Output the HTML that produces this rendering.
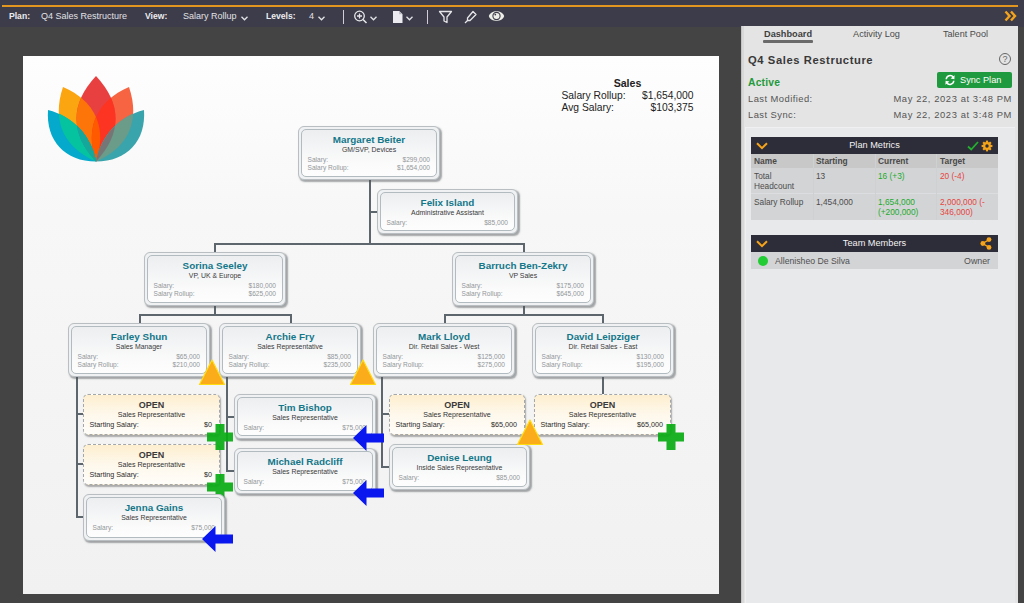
<!DOCTYPE html>
<html><head><meta charset="utf-8">
<style>
*{margin:0;padding:0;box-sizing:border-box}
html,body{width:1024px;height:603px;overflow:hidden;background:#444;font-family:"Liberation Sans", sans-serif}
.ab{position:absolute;display:block}
#top{position:absolute;left:0;top:0;width:1024px;height:27px;background:#3c3c4a}
#oline{position:absolute;left:2px;top:5px;width:1016px;height:2px;background:#e2961f}
.tb{position:absolute;top:11.3px;font-size:9px;line-height:10px;color:#e2e2e6;white-space:nowrap}
.tb.b{font-weight:bold;font-size:8.6px;color:#ececf0}
#canvas{position:absolute;left:23px;top:56px;width:696px;height:537.5px;background:linear-gradient(#fefefe 0%,#f7f7f7 30%,#f1f1f1 100%)}
#chart{position:absolute;left:0;top:0;width:1024px;height:603px}
.ln{position:absolute;background:#5c666c}
.nd{position:absolute;border:1px solid #b8bec2;border-radius:6px;background:#eff1f2;box-shadow:1.5px 1.5px 1.5px rgba(80,85,90,.5)}
.ni{position:absolute;left:2px;top:2px;right:2px;bottom:2px;border:1px solid #b2bbbf;border-radius:5px;background:linear-gradient(#eceef0,#fbfbfb 75%,#fdfdfd);text-align:center}
.nm{font-weight:bold;font-size:9.9px;line-height:10px;color:#13778a;margin-top:5px;white-space:nowrap}
.tt{font-size:6.9px;line-height:9px;color:#3a3a3a;white-space:nowrap}
.rw{display:flex;justify-content:space-between;font-size:6.6px;line-height:8.6px;color:#92979a;padding:0 6px 0 5.5px;white-space:nowrap}
.rw:nth-child(3){margin-top:2px}
.rw:nth-child(4){margin-top:-0.5px}
.op{position:absolute;border:1px dashed #a4a8aa;border-radius:5px;background:linear-gradient(#fdeecf,#fef8ec 50%,#fffdf9);box-shadow:1px 1.5px 1.5px rgba(60,60,60,.4);text-align:center}
.on{font-weight:bold;font-size:9px;line-height:10px;color:#3a3a3a;margin-top:5px}
.ot{font-size:7.1px;line-height:9px;color:#333;margin-top:0.5px}
.os{display:flex;justify-content:space-between;font-size:7.2px;line-height:9px;color:#2a2a2a;padding:0 7px 0 5.5px;white-space:nowrap;margin-top:0.7px}

#panel{position:absolute;left:741px;top:26px;width:277px;height:577px;background:#e4e4e4}
#pstrip{position:absolute;left:741px;top:26px;width:3px;height:577px;background:#d8d8d8;border-left:1px solid #c4c4c4}
#sect{position:absolute;left:745px;top:127px;width:270px;height:476px;background:#e8e9eb;border-top:1px solid #f0f0f2;border-left:1px solid #f0f0f2}
.hd{position:absolute;left:751px;width:247px;height:17px;background:#2d2d39;color:#f2f2f2;font-size:9.2px;line-height:17px;text-align:center}
.pt.th{font-weight:bold;font-size:8.4px;color:#4a4a4a}
.pt.td{font-size:8.3px;line-height:10px;color:#4c4c4c}
.pt.g{color:#21ab2c}
.pt.r{color:#e64440}
.pt{position:absolute;white-space:nowrap;font-size:9px;line-height:10px;color:#4a4a4a}
</style></head><body>
<div id="top"></div>
<div id="oline"></div>
<div class="tb b" style="left:9px">Plan:</div>
<div class="tb" style="left:41px">Q4 Sales Restructure</div>
<div class="tb b" style="left:145px">View:</div>
<div class="tb" style="left:183px">Salary Rollup</div>
<div class="tb b" style="left:266px">Levels:</div>
<div class="tb" style="left:309px">4</div>
<svg class="ab" style="left:240px;top:15px" width="9" height="7" viewBox="0 0 9 7"><path d="M1.5 1.8 L4.5 4.8 L7.5 1.8" fill="none" stroke="#e2e2e6" stroke-width="1.3"/></svg>
<svg class="ab" style="left:317px;top:15px" width="9" height="7" viewBox="0 0 9 7"><path d="M1.5 1.8 L4.5 4.8 L7.5 1.8" fill="none" stroke="#e2e2e6" stroke-width="1.3"/></svg>
<div class="ab" style="left:343px;top:10px;width:1px;height:14px;background:#d0d0d4"></div>
<svg class="ab" style="left:353px;top:10px" width="16" height="14" viewBox="0 0 16 14"><circle cx="6.5" cy="6" r="4.8" fill="none" stroke="#e6e6ea" stroke-width="1.3"/><path d="M4 6 H9 M6.5 3.5 V8.5" stroke="#e6e6ea" stroke-width="1.3"/><path d="M10 9.5 L13.5 13" stroke="#e6e6ea" stroke-width="1.6"/></svg>
<svg class="ab" style="left:369px;top:15px" width="9" height="7" viewBox="0 0 9 7"><path d="M1.5 1.8 L4.5 4.8 L7.5 1.8" fill="none" stroke="#e2e2e6" stroke-width="1.3"/></svg>
<svg class="ab" style="left:392px;top:10px" width="12" height="14" viewBox="0 0 12 14"><path d="M1 1 H7.2 L10.5 4.3 V13 H1 Z" fill="#ececf0"/><path d="M7.2 1 V4.3 H10.5" fill="#b8b8c0"/></svg>
<svg class="ab" style="left:405px;top:15px" width="9" height="7" viewBox="0 0 9 7"><path d="M1.5 1.8 L4.5 4.8 L7.5 1.8" fill="none" stroke="#e2e2e6" stroke-width="1.3"/></svg>
<div class="ab" style="left:427px;top:10px;width:1px;height:14px;background:#d0d0d4"></div>
<svg class="ab" style="left:438px;top:10px" width="15" height="14" viewBox="0 0 15 14"><path d="M1.5 1.5 H13.5 L9 7 V12.5 L6 11 V7 Z" fill="none" stroke="#e6e6ea" stroke-width="1.3" stroke-linejoin="round"/></svg>
<svg class="ab" style="left:463px;top:10px" width="15" height="14" viewBox="0 0 15 14"><path d="M10 1.5 L13 4.5 L7 10.5 L4.5 10.5 L4.5 8 Z" fill="none" stroke="#e6e6ea" stroke-width="1.3" stroke-linejoin="round"/><path d="M4.5 10.5 L2 13" stroke="#e6e6ea" stroke-width="1.3"/></svg>
<svg class="ab" style="left:488px;top:10px" width="17" height="12" viewBox="0 0 17 12"><path d="M0.8 6 C2.8 -0.5 14.2 -0.5 16.2 6 C14.2 12.5 2.8 12.5 0.8 6 Z" fill="#eeeee8"/><circle cx="8.5" cy="6" r="3.6" fill="none" stroke="#3c3c4a" stroke-width="1.1"/><circle cx="7.3" cy="4.6" r="0.9" fill="#3c3c4a"/></svg>
<svg class="ab" style="left:1004px;top:10px" width="14" height="12" viewBox="0 0 14 12"><path d="M1.5 1.5 L5.5 6 L1.5 10.5 M7 1.5 L11 6 L7 10.5" fill="none" stroke="#f5a31a" stroke-width="2.4"/></svg>
<div id="canvas"></div>
<svg class="ab" style="left:40px;top:68px" width="112" height="100" viewBox="40 68 112 100"><defs><clipPath id="cpc"><path d="M96.0 76.0 C122.0 103.4 122.0 134.1 96.0 161.5 C70.0 134.1 70.0 103.4 96.0 76.0 Z"/></clipPath><clipPath id="cpl"><path d="M63.0 87.0 C95.5 101.1 107.4 127.9 96.0 161.5 C63.5 147.4 51.6 120.6 63.0 87.0 Z"/></clipPath><clipPath id="cpr"><path d="M129.0 87.0 C140.4 120.6 128.5 147.4 96.0 161.5 C84.6 127.9 96.5 101.1 129.0 87.0 Z"/></clipPath><clipPath id="col"><path d="M48.0 110.0 C72.6 115.9 91.8 136.5 96.0 161.5 C65.0 161.5 45.8 140.9 48.0 110.0 Z"/></clipPath><clipPath id="cor"><path d="M144.0 110.0 C146.2 140.9 127.0 161.5 96.0 161.5 C100.2 136.5 119.4 115.9 144.0 110.0 Z"/></clipPath></defs><path d="M63.0 87.0 C95.5 101.1 107.4 127.9 96.0 161.5 C63.5 147.4 51.6 120.6 63.0 87.0 Z" fill="#fba511"/><path d="M129.0 87.0 C140.4 120.6 128.5 147.4 96.0 161.5 C84.6 127.9 96.5 101.1 129.0 87.0 Z" fill="#f76442"/><path d="M96.0 76.0 C122.0 103.4 122.0 134.1 96.0 161.5 C70.0 134.1 70.0 103.4 96.0 76.0 Z" fill="#e84040"/><g clip-path="url(#cpc)"><path d="M63.0 87.0 C95.5 101.1 107.4 127.9 96.0 161.5 C63.5 147.4 51.6 120.6 63.0 87.0 Z" fill="#fd7508"/><path d="M129.0 87.0 C140.4 120.6 128.5 147.4 96.0 161.5 C84.6 127.9 96.5 101.1 129.0 87.0 Z" fill="#fc3421"/></g><g clip-path="url(#cpl)"><g clip-path="url(#cpc)"><path d="M129.0 87.0 C140.4 120.6 128.5 147.4 96.0 161.5 C84.6 127.9 96.5 101.1 129.0 87.0 Z" fill="#ff5a00"/></g></g><path d="M48.0 110.0 C72.6 115.9 91.8 136.5 96.0 161.5 C65.0 161.5 45.8 140.9 48.0 110.0 Z" fill="#05a9cb"/><path d="M144.0 110.0 C146.2 140.9 127.0 161.5 96.0 161.5 C100.2 136.5 119.4 115.9 144.0 110.0 Z" fill="#3aa4ac"/><g clip-path="url(#col)"><path d="M63.0 87.0 C95.5 101.1 107.4 127.9 96.0 161.5 C63.5 147.4 51.6 120.6 63.0 87.0 Z" fill="#06c3a0"/><g clip-path="url(#cpl)"><path d="M96.0 76.0 C122.0 103.4 122.0 134.1 96.0 161.5 C70.0 134.1 70.0 103.4 96.0 76.0 Z" fill="#15a89a"/></g><path d="M96.0 76.0 C122.0 103.4 122.0 134.1 96.0 161.5 C70.0 134.1 70.0 103.4 96.0 76.0 Z" fill="#1a9fa6"/></g><g clip-path="url(#col)"><g clip-path="url(#cpl)"><path d="M96.0 76.0 C122.0 103.4 122.0 134.1 96.0 161.5 C70.0 134.1 70.0 103.4 96.0 76.0 Z" fill="#15a89a"/></g></g><g clip-path="url(#cor)"><path d="M129.0 87.0 C140.4 120.6 128.5 147.4 96.0 161.5 C84.6 127.9 96.5 101.1 129.0 87.0 Z" fill="#6b9b89"/><g clip-path="url(#cpr)"><path d="M96.0 76.0 C122.0 103.4 122.0 134.1 96.0 161.5 C70.0 134.1 70.0 103.4 96.0 76.0 Z" fill="#777676"/></g></g></svg>
<div class="ab" style="left:561.5px;top:76.5px;width:132px;height:40px;font-size:10.3px;line-height:12.3px;color:#222">
<div style="text-align:center;font-weight:bold;font-size:10.6px;line-height:13px;position:relative;top:0.5px">Sales</div>
<div style="display:flex;justify-content:space-between"><span>Salary Rollup:</span><span>$1,654,000</span></div>
<div style="display:flex;justify-content:space-between;position:relative;top:0.3px"><span>Avg Salary:</span><span>$103,375</span></div>
</div>
<div id="chart"><div class="ln" style="left:369px;top:178px;width:2px;height:66px"></div><div class="ln" style="left:369px;top:211px;width:8px;height:2px"></div><div class="ln" style="left:214px;top:243px;width:311px;height:2px"></div><div class="ln" style="left:214px;top:243px;width:2px;height:9px"></div><div class="ln" style="left:523px;top:243px;width:2px;height:9px"></div><div class="ln" style="left:214px;top:304px;width:2px;height:12px"></div><div class="ln" style="left:139px;top:314px;width:153px;height:2px"></div><div class="ln" style="left:139px;top:314px;width:2px;height:9px"></div><div class="ln" style="left:290px;top:314px;width:2px;height:9px"></div><div class="ln" style="left:523px;top:304px;width:2px;height:12px"></div><div class="ln" style="left:444px;top:314px;width:160px;height:2px"></div><div class="ln" style="left:444px;top:314px;width:2px;height:9px"></div><div class="ln" style="left:602px;top:314px;width:2px;height:9px"></div><div class="ln" style="left:76px;top:375px;width:2px;height:143px"></div><div class="ln" style="left:76px;top:413px;width:7px;height:2px"></div><div class="ln" style="left:76px;top:463px;width:7px;height:2px"></div><div class="ln" style="left:76px;top:516px;width:7px;height:2px"></div><div class="ln" style="left:226px;top:375px;width:2px;height:97px"></div><div class="ln" style="left:226px;top:416px;width:8px;height:2px"></div><div class="ln" style="left:226px;top:470px;width:8px;height:2px"></div><div class="ln" style="left:381px;top:375px;width:2px;height:93px"></div><div class="ln" style="left:381px;top:413px;width:8px;height:2px"></div><div class="ln" style="left:381px;top:466px;width:8px;height:2px"></div><div class="ln" style="left:602px;top:375px;width:2px;height:19px"></div><div class="nd" style="left:298px;top:126px;width:142px;height:54px"><div class="ni"><div class="nm">Margaret Beiter</div><div class="tt">GM/SVP, Devices</div><div class="rw"><span>Salary:</span><span>$299,000</span></div><div class="rw"><span>Salary Rollup:</span><span>$1,654,000</span></div></div></div><div class="nd" style="left:377px;top:189px;width:141px;height:45px"><div class="ni"><div class="nm">Felix Island</div><div class="tt">Administrative Assistant</div><div class="rw"><span>Salary:</span><span>$85,000</span></div></div></div><div class="nd" style="left:144px;top:252px;width:142px;height:54px"><div class="ni"><div class="nm">Sorina Seeley</div><div class="tt">VP, UK &amp; Europe</div><div class="rw"><span>Salary:</span><span>$180,000</span></div><div class="rw"><span>Salary Rollup:</span><span>$625,000</span></div></div></div><div class="nd" style="left:452px;top:252px;width:142px;height:54px"><div class="ni"><div class="nm">Barruch Ben-Zekry</div><div class="tt">VP Sales</div><div class="rw"><span>Salary:</span><span>$175,000</span></div><div class="rw"><span>Salary Rollup:</span><span>$645,000</span></div></div></div><div class="nd" style="left:68px;top:323px;width:142px;height:54px"><div class="ni"><div class="nm">Farley Shun</div><div class="tt">Sales Manager</div><div class="rw"><span>Salary:</span><span>$65,000</span></div><div class="rw"><span>Salary Rollup:</span><span>$210,000</span></div></div></div><div class="nd" style="left:219px;top:323px;width:142px;height:54px"><div class="ni"><div class="nm">Archie Fry</div><div class="tt">Sales Representative</div><div class="rw"><span>Salary:</span><span>$85,000</span></div><div class="rw"><span>Salary Rollup:</span><span>$235,000</span></div></div></div><div class="nd" style="left:373px;top:323px;width:142px;height:54px"><div class="ni"><div class="nm">Mark Lloyd</div><div class="tt">Dir. Retail Sales - West</div><div class="rw"><span>Salary:</span><span>$125,000</span></div><div class="rw"><span>Salary Rollup:</span><span>$275,000</span></div></div></div><div class="nd" style="left:532px;top:323px;width:142px;height:54px"><div class="ni"><div class="nm">David Leipziger</div><div class="tt">Dir. Retail Sales - East</div><div class="rw"><span>Salary:</span><span>$130,000</span></div><div class="rw"><span>Salary Rollup:</span><span>$195,000</span></div></div></div><div class="nd" style="left:234px;top:394px;width:142px;height:45px"><div class="ni"><div class="nm">Tim Bishop</div><div class="tt">Sales Representative</div><div class="rw"><span>Salary:</span><span>$75,000</span></div></div></div><div class="nd" style="left:234px;top:448px;width:142px;height:46px"><div class="ni"><div class="nm">Michael Radcliff</div><div class="tt">Sales Representative</div><div class="rw"><span>Salary:</span><span>$75,000</span></div></div></div><div class="nd" style="left:389px;top:444px;width:141px;height:46px"><div class="ni"><div class="nm">Denise Leung</div><div class="tt">Inside Sales Representative</div><div class="rw"><span>Salary:</span><span>$85,000</span></div></div></div><div class="op" style="left:83px;top:394px;width:137px;height:41px"><div class="on">OPEN</div><div class="ot">Sales Representative</div><div class="os"><span>Starting Salary:</span><span>$0</span></div></div><div class="op" style="left:83px;top:444px;width:137px;height:41px"><div class="on">OPEN</div><div class="ot">Sales Representative</div><div class="os"><span>Starting Salary:</span><span>$0</span></div></div><div class="op" style="left:389px;top:394px;width:136px;height:41px"><div class="on">OPEN</div><div class="ot">Sales Representative</div><div class="os"><span>Starting Salary:</span><span>$65,000</span></div></div><div class="op" style="left:534px;top:394px;width:137px;height:41px"><div class="on">OPEN</div><div class="ot">Sales Representative</div><div class="os"><span>Starting Salary:</span><span>$65,000</span></div></div><svg class="ab" style="left:197.5px;top:358.5px" width="28" height="28" viewBox="0 0 28 28"><path d="M14 1 L26.5 25.5 L1.5 25.5 Z" fill="#fbac1b" stroke="#ffdc10" stroke-width="1.2" stroke-linejoin="round"/></svg><svg class="ab" style="left:349px;top:358.5px" width="28" height="28" viewBox="0 0 28 28"><path d="M14 1 L26.5 25.5 L1.5 25.5 Z" fill="#fbac1b" stroke="#ffdc10" stroke-width="1.2" stroke-linejoin="round"/></svg><svg class="ab" style="left:515.5px;top:418.5px" width="28" height="28" viewBox="0 0 28 28"><path d="M14 1 L26.5 25.5 L1.5 25.5 Z" fill="#fbac1b" stroke="#ffdc10" stroke-width="1.2" stroke-linejoin="round"/></svg><svg class="ab" style="left:207px;top:423.5px" width="26" height="26" viewBox="0 0 26 26"><path d="M8.5 0 H17.5 V8.5 H26 V17.5 H17.5 V26 H8.5 V17.5 H0 V8.5 H8.5 Z" fill="#08ab12" fill-opacity="0.92"/></svg><svg class="ab" style="left:207px;top:473.5px" width="26" height="26" viewBox="0 0 26 26"><path d="M8.5 0 H17.5 V8.5 H26 V17.5 H17.5 V26 H8.5 V17.5 H0 V8.5 H8.5 Z" fill="#08ab12" fill-opacity="0.92"/></svg><svg class="ab" style="left:657.5px;top:423.5px" width="26" height="26" viewBox="0 0 26 26"><path d="M8.5 0 H17.5 V8.5 H26 V17.5 H17.5 V26 H8.5 V17.5 H0 V8.5 H8.5 Z" fill="#08ab12" fill-opacity="0.92"/></svg><div class="nd" style="left:83px;top:494px;width:142px;height:47px"><div class="ni"><div class="nm">Jenna Gains</div><div class="tt">Sales Representative</div><div class="rw"><span>Salary:</span><span>$75,000</span></div></div></div><svg class="ab" style="left:352.5px;top:424.8px" width="31" height="26" viewBox="0 0 31 26"><path d="M0 13 L13.5 0 V8.5 H31 V17.5 H13.5 V26 Z" fill="#0a17ee"/></svg><svg class="ab" style="left:352.5px;top:479.8px" width="31" height="26" viewBox="0 0 31 26"><path d="M0 13 L13.5 0 V8.5 H31 V17.5 H13.5 V26 Z" fill="#0a17ee"/></svg><svg class="ab" style="left:201.5px;top:526px" width="31" height="26" viewBox="0 0 31 26"><path d="M0 13 L13.5 0 V8.5 H31 V17.5 H13.5 V26 Z" fill="#0a17ee"/></svg></div>

<div id="panel"></div>
<div id="pstrip"></div>
<div class="pt" style="left:764px;top:29px;font-weight:bold;font-size:9.2px;color:#3f3f3f">Dashboard</div>
<div class="ab" style="left:763px;top:40px;width:50px;height:3px;background:#6a6a6a;border-radius:1px"></div>
<div class="pt" style="left:853px;top:29px;font-size:9.2px;color:#4a4a4a">Activity Log</div>
<div class="pt" style="left:943px;top:29px;font-size:9.1px;color:#4a4a4a">Talent Pool</div>
<div class="pt" style="left:748px;top:54px;font-weight:bold;font-size:11.2px;line-height:12px;color:#383838;letter-spacing:0.6px">Q4 Sales Restructure</div>
<svg class="ab" style="left:998px;top:52px" width="14" height="14" viewBox="0 0 14 14"><circle cx="7" cy="7" r="5.5" fill="none" stroke="#666" stroke-width="1"/><text x="7" y="10.3" text-anchor="middle" font-family="Liberation Sans" font-size="9" fill="#666">?</text></svg>
<div class="pt" style="left:748px;top:77px;font-weight:bold;font-size:10.3px;line-height:11px;color:#1f9a3a;letter-spacing:0.2px">Active</div>
<div class="ab" style="left:937px;top:72px;width:75px;height:16px;background:#1f9a3e;border-radius:2px"></div>
<svg class="ab" style="left:944px;top:74px" width="12" height="12" viewBox="0 0 12 12"><path d="M2.2 5.2 A3.9 3.9 0 0 1 9.3 3.3" fill="none" stroke="#fff" stroke-width="1.5"/><path d="M10.6 1.2 L10.4 5.2 L6.6 4.4 Z" fill="#fff"/><path d="M9.8 6.8 A3.9 3.9 0 0 1 2.7 8.7" fill="none" stroke="#fff" stroke-width="1.5"/><path d="M1.4 10.8 L1.6 6.8 L5.4 7.6 Z" fill="#fff"/></svg>
<div class="pt" style="left:960px;top:75px;font-size:9.2px;color:#fff">Sync Plan</div>
<div class="pt" style="left:748px;top:94px;font-size:9.4px;color:#555;letter-spacing:0.45px">Last Modified:</div>
<div class="pt" style="left:748px;top:110px;font-size:9.4px;color:#555;letter-spacing:0.45px">Last Sync:</div>
<div class="pt" style="right:12px;top:94px;font-size:9.4px;color:#555;letter-spacing:0.6px">May 22, 2023 at 3:48 PM</div>
<div class="pt" style="right:12px;top:110px;font-size:9.4px;color:#555;letter-spacing:0.6px">May 22, 2023 at 3:48 PM</div>
<div id="sect"></div>
<div class="hd" style="top:137px">Plan Metrics</div>
<svg class="ab" style="left:756px;top:142px" width="12" height="8" viewBox="0 0 12 8"><path d="M1 1.2 L6 6.2 L11 1.2" fill="none" stroke="#f5a31a" stroke-width="2"/></svg>
<svg class="ab" style="left:967px;top:141px" width="12" height="10" viewBox="0 0 12 10"><path d="M1 5.5 L4.2 8.5 L11 1" fill="none" stroke="#23b02e" stroke-width="1.8"/></svg>
<svg class="ab" style="left:980.5px;top:139.5px" width="12" height="12" viewBox="0 0 12 12"><g fill="#f5a31a"><circle cx="6" cy="6" r="3.9"/><rect x="4.9" y="0.6" width="2.2" height="10.8"/><rect x="0.6" y="4.9" width="10.8" height="2.2"/><rect x="4.9" y="0.6" width="2.2" height="10.8" transform="rotate(45 6 6)"/><rect x="4.9" y="0.6" width="2.2" height="10.8" transform="rotate(-45 6 6)"/></g><circle cx="6" cy="6" r="1.7" fill="#2d2d39"/></svg>
<div class="ab" style="left:751px;top:154px;width:247px;height:14px;background:#c8c8c8"></div>
<div class="ab" style="left:751px;top:168px;width:247px;height:52px;background:#d3d4d6"></div>
<div class="ab" style="left:751px;top:193px;width:247px;height:1px;background:#dcdde0"></div>
<div class="ab" style="left:813px;top:154px;width:1px;height:66px;background:#cfd0d2"></div>
<div class="ab" style="left:875px;top:154px;width:1px;height:66px;background:#cfd0d2"></div>
<div class="ab" style="left:936px;top:154px;width:1px;height:66px;background:#cfd0d2"></div>
<div class="pt th" style="left:754px;top:156px">Name</div>
<div class="pt th" style="left:816px;top:156px">Starting</div>
<div class="pt th" style="left:878px;top:156px">Current</div>
<div class="pt th" style="left:940px;top:156px">Target</div>
<div class="pt td" style="left:754px;top:171px">Total<br>Headcount</div>
<div class="pt td" style="left:816px;top:171px">13</div>
<div class="pt td g" style="left:878px;top:171px">16 (+3)</div>
<div class="pt td r" style="left:940px;top:171px">20 (-4)</div>
<div class="pt td" style="left:754px;top:197px">Salary Rollup</div>
<div class="pt td" style="left:816px;top:197px">1,454,000</div>
<div class="pt td g" style="left:878px;top:197px">1,654,000<br>(+200,000)</div>
<div class="pt td r" style="left:940px;top:197px">2,000,000 (-<br>346,000)</div>
<div class="hd" style="top:235px">Team Members</div>
<svg class="ab" style="left:756px;top:240px" width="12" height="8" viewBox="0 0 12 8"><path d="M1 1.2 L6 6.2 L11 1.2" fill="none" stroke="#f5a31a" stroke-width="2"/></svg>
<svg class="ab" style="left:980px;top:237px" width="12" height="13" viewBox="0 0 12 13"><g fill="#f5a31a"><circle cx="9" cy="2.6" r="2.4"/><circle cx="2.8" cy="6.5" r="2.4"/><circle cx="9" cy="10.4" r="2.4"/></g><path d="M9 2.6 L2.8 6.5 L9 10.4" stroke="#f5a31a" stroke-width="1.3" fill="none"/></svg>
<div class="ab" style="left:751px;top:252px;width:247px;height:17px;background:#d3d4d6"></div>
<div class="ab" style="left:758px;top:256px;width:10px;height:10px;border-radius:50%;background:#22cc33"></div>
<div class="pt" style="left:775px;top:256px;font-size:8.7px;color:#505050">Allenisheo De Silva</div>
<div class="pt" style="right:34px;top:256px;font-size:8.8px;color:#505050">Owner</div>
</body></html>
